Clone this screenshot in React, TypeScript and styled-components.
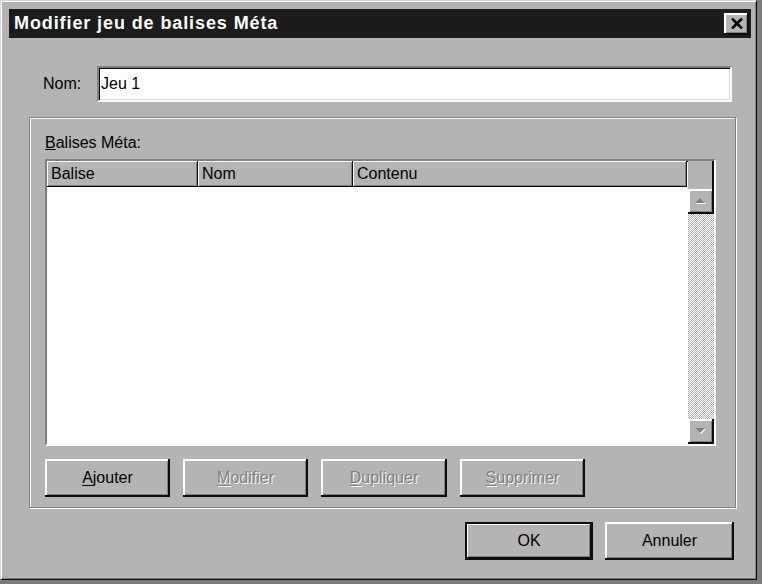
import styled, { createGlobalStyle, css } from 'styled-components'

const FACE = '#b4b4b4'

const GlobalStyle = createGlobalStyle`
	html, body {
		margin: 0;
		padding: 0;
		background: #7c7c7c;
	}
	body {
		font-family: 'Liberation Sans', Arial, sans-serif;
		font-size: 16px;
		color: #000;
	}
`

// classic raised 3D edge used by buttons, header cells and scroll arrows
const raised = css`
	background: ${FACE};
	border: none;
	box-shadow:
		inset -2px -2px 0 #0c0c0c,
		inset 2px 2px 0 #fff,
		inset -3px -3px 0 #808080;
`

const sunken = css`
	border: 2px solid;
	border-color: #808080 #fff #fff #808080;
	box-shadow:
		inset 1px 1px 0 #0c0c0c,
		inset -1px -1px 0 #dcdcdc;
`

const columns = [
	{ label: 'Balise', width: 151 },
	{ label: 'Nom', width: 155 },
	{ label: 'Contenu', width: 334 },
]

const Mnemonic = ({ text, disabled }: { text: string; disabled?: boolean }) => (
	<Caption $disabled={disabled}>
		<u>{text[0]}</u>
		{text.slice(1)}
	</Caption>
)

const Arrow = ({ dir }: { dir: 'up' | 'down' }) => {
	const pts = dir === 'up' ? '5,0 10,5 0,5' : '0,0 10,0 5,5'
	return (
		<svg width='12' height='7' viewBox='0 0 12 7'>
			<polygon points={pts} fill='#fff' transform='translate(1 1)' />
			<polygon points={pts} fill='#808080' />
		</svg>
	)
}

const App = () => {
	return (
		<>
			<GlobalStyle />
			<Window>
				<TitleBar>
					<span>Modifier jeu de balises Méta</span>
					<CloseBtn type='button'>
						<svg width='12' height='11' viewBox='0 0 12 11'>
							<path d='M1 0.5 L11 10.5 M11 0.5 L1 10.5' stroke='#000' strokeWidth='2.6' />
						</svg>
					</CloseBtn>
				</TitleBar>

				<Body>
					<NameRow>
						<NameLabel>Nom:</NameLabel>
						<TextField defaultValue='Jeu 1' />
					</NameRow>

					<GroupBox>
						<GroupLabel>
							<u>B</u>alises Méta:
						</GroupLabel>
						<ListView>
							<ListMain>
								<HeaderRow>
									{columns.map((c) => (
										<HeaderCell key={c.label} $width={c.width}>
											{c.label}
										</HeaderCell>
									))}
								</HeaderRow>
								<ListBody />
							</ListMain>
							<ScrollBar>
								<ScrollCorner />
								<ScrollBtn type='button'>
									<Arrow dir='up' />
								</ScrollBtn>
								<ScrollTrack />
								<ScrollBtn type='button'>
									<Arrow dir='down' />
								</ScrollBtn>
							</ScrollBar>
						</ListView>

						<ActionRow>
							<Button type='button' $width={125}>
								<Mnemonic text='Ajouter' />
							</Button>
							<Button type='button' $width={125} disabled>
								<Mnemonic text='Modifier' disabled />
							</Button>
							<Button type='button' $width={126} disabled>
								<Mnemonic text='Dupliquer' disabled />
							</Button>
							<Button type='button' $width={125} disabled>
								<Mnemonic text='Supprimer' disabled />
							</Button>
						</ActionRow>
					</GroupBox>

					<Footer>
						<Button type='button' $width={128} $default>
							<Caption>OK</Caption>
						</Button>
						<Button type='button' $width={129}>
							<Caption>Annuler</Caption>
						</Button>
					</Footer>
				</Body>
			</Window>
		</>
	)
}

const Window = styled.div`
	width: 757px;
	height: 580px;
	box-sizing: border-box;
	background: ${FACE};
	padding: 8px 5px 6px 8px;
	display: flex;
	flex-direction: column;
	border: 1px solid;
	border-color: #d8d8d8 #0c0c0c #0c0c0c #d8d8d8;
	box-shadow:
		inset 1px 1px 0 #fff,
		inset -1px -1px 0 #808080;
`

const TitleBar = styled.div`
	height: 29px;
	flex-shrink: 0;
	background: #1c1c1c;
	color: #fff;
	display: flex;
	align-items: center;
	justify-content: space-between;
	padding: 0 2px 0 5px;
	font-weight: bold;
	font-size: 18px;
	letter-spacing: 0.9px;
`

const CloseBtn = styled.button`
	${raised};
	width: 25px;
	height: 22px;
	padding: 0;
	display: flex;
	align-items: center;
	justify-content: center;
`

const Body = styled.div`
	flex: 1;
	display: flex;
	flex-direction: column;
	padding: 28px 15px 0 20px;
`

const NameRow = styled.div`
	display: flex;
	align-items: center;
	gap: 8px;
	padding: 0 4px 0 14px;
`

const NameLabel = styled.span`
	min-width: 46px;
`

const TextField = styled.input`
	${sunken};
	flex: 1;
	height: 36px;
	box-sizing: border-box;
	background: #fff;
	font: inherit;
	padding: 0 2px;
	outline: none;
`

const GroupBox = styled.fieldset`
	margin: 15px 0 0;
	height: 391px;
	box-sizing: border-box;
	border: 1px solid #808080;
	box-shadow:
		1px 1px 0 #fff,
		inset 1px 1px 0 #fff;
	padding: 15px 19px 0 15px;
	display: flex;
	flex-direction: column;
`

const GroupLabel = styled.div`
	line-height: 20px;
	margin-bottom: 6px;
`

const ListView = styled.div`
	${sunken};
	height: 287px;
	box-sizing: border-box;
	display: grid;
	grid-template-columns: 1fr 26px;
	background: #fff;
`

const ListMain = styled.div`
	display: flex;
	flex-direction: column;
	min-width: 0;
`

const HeaderRow = styled.div`
	display: flex;
	height: 26px;
	flex-shrink: 0;
`

const HeaderCell = styled.div<{ $width: number }>`
	${raised};
	box-shadow:
		inset -1px -1px 0 #0c0c0c,
		inset 1px 1px 0 #fff,
		inset -2px -2px 0 #808080;
	width: ${(p) => p.$width}px;
	box-sizing: border-box;
	padding: 0 4px;
	display: flex;
	align-items: center;
`

const ListBody = styled.div`
	flex: 1;
	background: #fff;
`

const ScrollBar = styled.div`
	display: flex;
	flex-direction: column;
`

const ScrollCorner = styled.div`
	height: 28px;
	background: ${FACE};
	box-shadow: inset -2px 0 0 #0c0c0c;
`

const ScrollBtn = styled.button`
	${raised};
	height: 25px;
	padding: 0;
	display: flex;
	align-items: center;
	justify-content: center;
`

const ScrollTrack = styled.div`
	flex: 1;
	background-color: #fff;
	background-image: conic-gradient(${FACE} 25%, transparent 0 50%, ${FACE} 0 75%, transparent 0);
	background-size: 2px 2px;
`

const ActionRow = styled.div`
	display: flex;
	gap: 13px;
	margin-top: 13px;
`

const Button = styled.button<{ $width: number; $default?: boolean }>`
	${raised};
	width: ${(p) => p.$width}px;
	height: 38px;
	padding: 0;
	font: inherit;
	display: flex;
	align-items: center;
	justify-content: center;
	${(p) =>
		p.$default &&
		css`
			box-shadow:
				inset 0 0 0 2px #0c0c0c,
				inset -3px -3px 0 #0c0c0c,
				inset 3px 3px 0 #fff,
				inset -4px -4px 0 #808080;
		`}
`

const Caption = styled.span<{ $disabled?: boolean }>`
	color: ${(p) => (p.$disabled ? '#808080' : '#000')};
	text-shadow: ${(p) => (p.$disabled ? '1px 1px 0 #fff' : 'none')};
	u {
		text-underline-offset: 2px;
	}
`

const Footer = styled.div`
	display: flex;
	justify-content: flex-end;
	gap: 12px;
	margin-top: 14px;
	padding-right: 2px;
`

export default App
